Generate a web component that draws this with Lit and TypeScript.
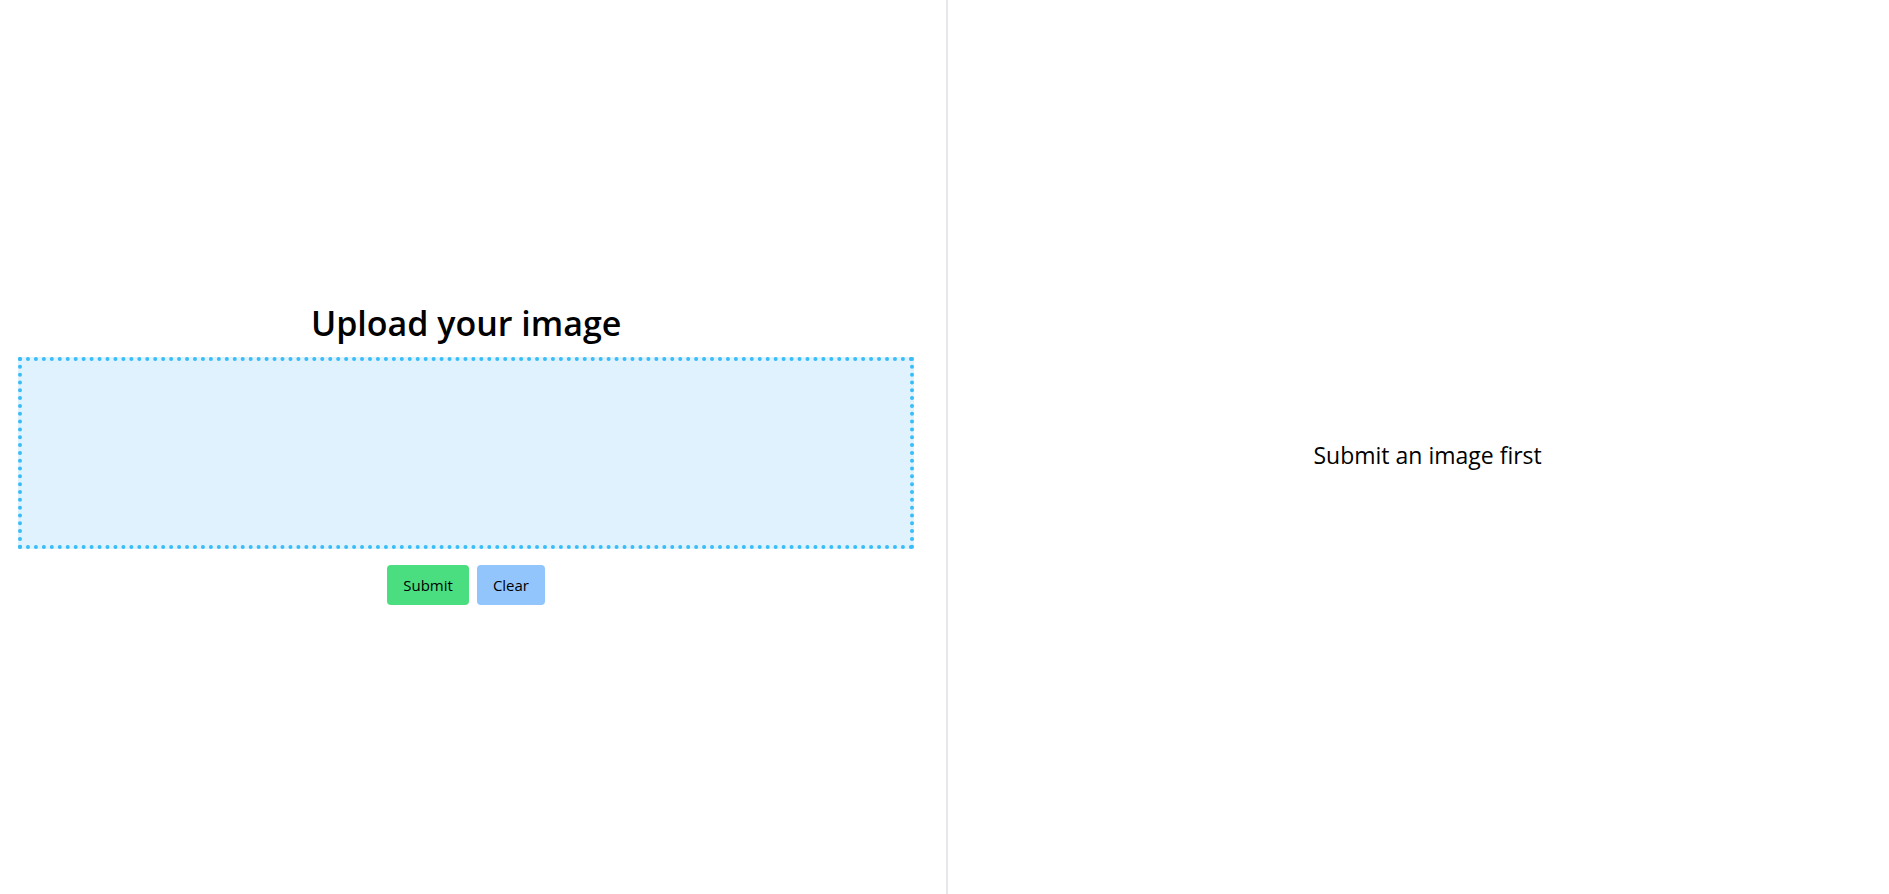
import { LitElement, html, css } from "lit";
import { customElement } from "lit/decorators.js";

@customElement("app-root")
export class AppRoot extends LitElement {
  static styles = css`
    :host {
      display: flex;
      min-height: 100vh;
      background: #fff;
      color: #000;
      font-family: "Segoe UI", "Open Sans", "Noto Sans", sans-serif;
      font-size: 15px;
      line-height: 24px;
    }
    * {
      box-sizing: border-box;
    }
    .upload {
      flex: 0 0 50.2%;
      display: flex;
      flex-direction: column;
      align-items: center;
      justify-content: center;
      padding: 0 32px 0 18px;
      border-right: 2px solid #e5e7eb;
    }
    .title {
      margin: 14px 0;
      font-size: 34px;
      line-height: 40px;
      font-weight: 600;
    }
    .dropzone {
      display: block;
      width: 100%;
      height: 192px;
      border: 4px dotted #38bdf8;
      background: #e0f2fe;
      cursor: pointer;
    }
    .file {
      display: block;
      width: 100%;
      height: 100%;
      opacity: 0;
      cursor: pointer;
    }
    .actions {
      display: flex;
      gap: 8px;
      margin-top: 16px;
    }
    .button {
      padding: 8px 16px;
      border: 0;
      border-radius: 4px;
      color: inherit;
      font: inherit;
      cursor: pointer;
    }
    .submit {
      background: #4ade80;
    }
    .clear {
      background: #93c5fd;
    }
    .result {
      flex: 1;
      display: flex;
      align-items: center;
      justify-content: center;
      padding: 16px 0 0 18px;
    }
    .message {
      margin: 0;
      font-size: 23px;
      line-height: 32px;
    }
  `;

  private clear() {
    this.renderRoot.querySelector<HTMLInputElement>(".file")!.value = "";
  }

  render() {
    return html`
      <section class="upload">
        <h1 class="title">Upload your image</h1>
        <label class="dropzone">
          <input class="file" type="file" accept="image/*" aria-label="Upload your image" />
        </label>
        <div class="actions">
          <button class="button submit" type="button">Submit</button>
          <button class="button clear" type="button" @click=${this.clear}>Clear</button>
        </div>
      </section>
      <section class="result">
        <p class="message">Submit an image first</p>
      </section>
    `;
  }
}
